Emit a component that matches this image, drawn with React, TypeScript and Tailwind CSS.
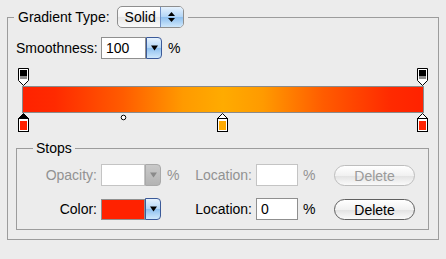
import React from "react";

const aqua =
  "bg-[linear-gradient(#e6f2fe,#b4d6f6_48%,#8fc0ef_52%,#cfe8fc)]";

function DownArrow({ color = "#000" }: { color?: string }) {
  return (
    <svg width="7" height="6" viewBox="0 0 7 6">
      <path d="M0 0.5 H7 L3.5 5.5 Z" fill={color} />
    </svg>
  );
}

function DropButton({ disabled = false }: { disabled?: boolean }) {
  return (
    <div
      className={`flex h-[22px] w-[16px] items-center justify-center rounded-r-[4px] border ${
        disabled
          ? "border-[#a9a9a9] bg-[linear-gradient(#c9c9c9,#b3b3b3)]"
          : `border-[#3b5a99] ${aqua}`
      }`}
    >
      <DownArrow color={disabled ? "#8a8a8a" : "#000"} />
    </div>
  );
}

function TopStop({ left }: { left: number }) {
  return (
    <svg
      className="absolute top-0"
      style={{ left }}
      width="11"
      height="18"
      viewBox="0 0 11 18"
    >
      <path d="M0.5 0.5 H10.5 V12.5 L5.5 17.5 L0.5 12.5 Z" fill="#fff" stroke="#000" />
      <rect x="2" y="2" width="7" height="6" fill="#000" />
      <rect x="2" y="8" width="7" height="3" fill="#8c8c8c" />
    </svg>
  );
}

function BottomStop({
  left,
  color,
  selected = false,
}: {
  left: number;
  color: string;
  selected?: boolean;
}) {
  return (
    <svg
      className="absolute top-[45px]"
      style={{ left }}
      width="11"
      height="19"
      viewBox="0 0 11 19"
    >
      <path
        d="M5.5 0.5 L10.5 5.5 V18.5 H0.5 V5.5 Z"
        fill={selected ? "#000" : "#fff"}
        stroke="#000"
      />
      <rect x="0.5" y="5.5" width="10" height="13" fill="#fff" stroke="#000" />
      <rect x="2" y="8" width="7" height="9" fill={color} />
    </svg>
  );
}

function PushButton({ disabled = false }: { disabled?: boolean }) {
  return (
    <button
      className={`h-[21px] w-[81px] rounded-full border bg-[linear-gradient(#ffffff,#f1f1f1_50%,#e2e2e2_52%,#fafafa)] text-[14px] ${
        disabled
          ? "border-[#bdbdbd] text-[#9a9a9a]"
          : "border-[#5f5f5f] text-black"
      }`}
    >
      Delete
    </button>
  );
}

export default function App() {
  return (
    <div
      className="h-[259px] w-[446px] overflow-hidden bg-[#ececec] pl-[7px] pt-[6px] text-[14px] text-black"
      style={{ fontFamily: '"Liberation Sans", Arial, sans-serif' }}
    >
      <fieldset className="w-[432px] border border-[#9c9c9c] pb-[9px]">
        <legend className="ml-[6px] flex items-center px-[4px]">
          <span className="mr-[7px]">Gradient Type:</span>
          <div className="flex h-[22px] w-[67px] overflow-hidden rounded-[5px] border border-[#8e8e8e] bg-[linear-gradient(#ffffff,#f3f3f3_50%,#e6e6e6_52%,#fbfbfb)]">
            <span className="flex flex-1 items-center pl-[7px]">Solid</span>
            <div
              className={`flex w-[23px] flex-col items-center justify-center gap-[2px] border-l border-[#6f8fc4] ${aqua}`}
            >
              <svg width="7" height="4" viewBox="0 0 7 4">
                <path d="M0 4 H7 L3.5 0 Z" fill="#000" />
              </svg>
              <svg width="7" height="4" viewBox="0 0 7 4">
                <path d="M0 0 H7 L3.5 4 Z" fill="#000" />
              </svg>
            </div>
          </div>
        </legend>

        {/* Smoothness */}
        <div className="mt-[9px] flex h-[22px] items-center pl-[8px]">
          <span className="w-[85px]">Smoothness:</span>
          <div className="flex h-[22px] w-[45px] items-center border border-[#8f8f8f] bg-white pl-[4px]">
            100
          </div>
          <DropButton />
          <span className="ml-[6px]">%</span>
        </div>

        {/* Gradient slider */}
        <div className="relative ml-[10px] mt-[9px] h-[63px] w-[410px] pt-[18px]">
          <TopStop left={0} />
          <TopStop left={399} />
          <div className="ml-[4px] h-[27px] w-[402px] border border-[#8a8a8a] bg-[linear-gradient(to_right,#ff2200_0%,#ff2a00_8%,#ff5c00_25%,#ff9a00_40%,#ffab00_50%,#ff9a00_60%,#ff5c00_75%,#ff2a00_92%,#ff2200_100%)]" />
          <svg
            className="absolute left-[102px] top-[46px]"
            width="7"
            height="7"
            viewBox="0 0 7 7"
          >
            <circle cx="3.5" cy="3.5" r="2.3" fill="#fff" stroke="#000" />
          </svg>
          <BottomStop left={0} color="#ff2200" selected />
          <BottomStop left={199} color="#ffaa00" />
          <BottomStop left={399} color="#ff2200" />
        </div>

        {/* Stops */}
        <fieldset className="ml-[8px] mt-[9px] w-[413px] border border-[#9c9c9c] pb-[9px]">
          <legend className="ml-[16px] px-[3px] leading-[16px]">Stops</legend>

          <div className="mt-[8px] flex h-[22px] items-center text-[#929292]">
            <span className="w-[80px] text-right">Opacity:</span>
            <div className="ml-[4px] h-[22px] w-[44px] border border-[#c4c4c4] bg-white" />
            <DropButton disabled />
            <span className="w-[34px] pl-[6px]">%</span>
            <span className="w-[57px] text-right">Location:</span>
            <div className="ml-[4px] h-[22px] w-[42px] border border-[#c4c4c4] bg-white" />
            <span className="w-[36px] pl-[5px]">%</span>
            <PushButton disabled />
          </div>

          <div className="mt-[12px] flex h-[22px] items-center">
            <span className="w-[80px] text-right">Color:</span>
            <div className="ml-[4px] h-[21px] w-[44px] border border-[#8f8f8f] bg-[#ff2200]" />
            <DropButton />
            <span className="w-[34px] pl-[6px]"></span>
            <span className="w-[57px] text-right">Location:</span>
            <div className="ml-[4px] flex h-[22px] w-[42px] items-center border border-[#8f8f8f] bg-white pl-[4px]">
              0
            </div>
            <span className="w-[36px] pl-[5px]">%</span>
            <PushButton />
          </div>
        </fieldset>
      </fieldset>
    </div>
  );
}
